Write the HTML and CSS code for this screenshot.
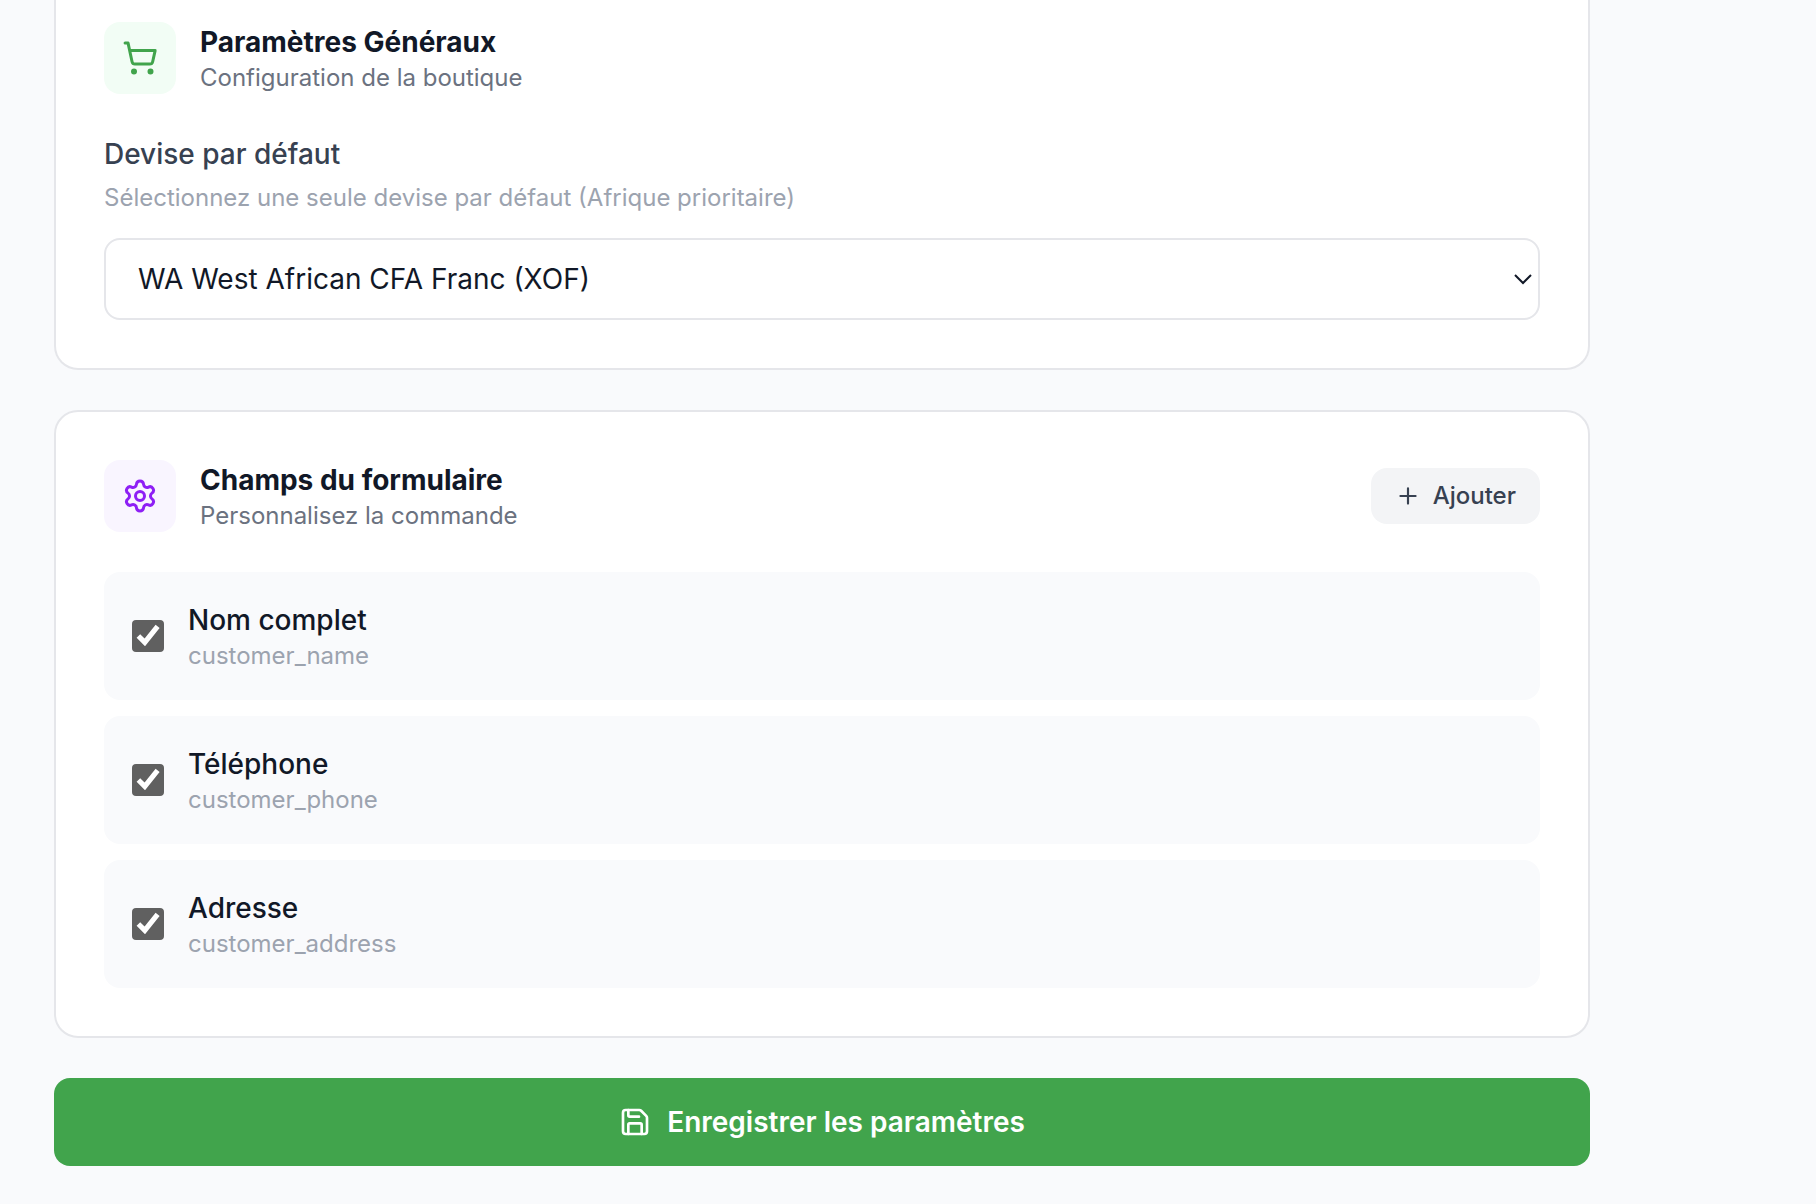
FILE: index.html
```html
<!DOCTYPE html>
<html lang="fr">
<head>
  <meta charset="utf-8">
  <meta name="viewport" content="width=device-width, initial-scale=1">
  <title>Paramètres</title>
  <link rel="stylesheet" href="styles.css">
</head>
<body>
  <main class="page">
    <form class="settings">
      <section class="card card--flush-top">
        <header class="card-header">
          <span class="tile tile--green">
            <svg class="icon" viewBox="0 0 24 24" aria-hidden="true">
              <circle cx="8" cy="21" r="1"/>
              <circle cx="19" cy="21" r="1"/>
              <path d="M2.05 2.05h2l2.66 12.42a2 2 0 0 0 2 1.58h9.78a2 2 0 0 0 1.95-1.57l1.65-7.43H5.12"/>
            </svg>
          </span>
          <div class="card-heading">
            <h2 class="title">Paramètres Généraux</h2>
            <p class="subtitle">Configuration de la boutique</p>
          </div>
        </header>
        <label class="field-label" for="currency">Devise par défaut</label>
        <p class="field-help" id="currency-help">Sélectionnez une seule devise par défaut (Afrique prioritaire)</p>
        <div class="select-wrap">
          <select class="select" id="currency" aria-describedby="currency-help">
            <option>WA West African CFA Franc (XOF)</option>
          </select>
          <svg class="chevron" viewBox="0 0 18 12" aria-hidden="true">
            <path d="M1 2l8 8 8-8"/>
          </svg>
        </div>
      </section>

      <section class="card">
        <header class="card-header">
          <span class="tile tile--purple">
            <svg class="icon" viewBox="0 0 24 24" aria-hidden="true">
              <path d="M9.671 4.136a2.34 2.34 0 0 1 4.659 0 2.34 2.34 0 0 0 3.319 1.915 2.34 2.34 0 0 1 2.33 4.033 2.34 2.34 0 0 0 0 3.831 2.34 2.34 0 0 1-2.33 4.033 2.34 2.34 0 0 0-3.319 1.915 2.34 2.34 0 0 1-4.659 0 2.34 2.34 0 0 0-3.32-1.915 2.34 2.34 0 0 1-2.33-4.033 2.34 2.34 0 0 0 0-3.831A2.34 2.34 0 0 1 6.35 6.051a2.34 2.34 0 0 0 3.319-1.915"/>
              <circle cx="12" cy="12" r="3"/>
            </svg>
          </span>
          <div class="card-heading">
            <h2 class="title">Champs du formulaire</h2>
            <p class="subtitle">Personnalisez la commande</p>
          </div>
          <button class="add-button" type="button">
            <svg class="icon icon--small" viewBox="0 0 24 24" aria-hidden="true">
              <path d="M5 12h14M12 5v14"/>
            </svg>
            Ajouter
          </button>
        </header>
        <div class="fields">
          <label class="field-row">
            <input class="checkbox" type="checkbox" checked>
            <span class="field-text">
              <span class="field-name">Nom complet</span>
              <span class="field-key">customer_name</span>
            </span>
          </label>
          <label class="field-row">
            <input class="checkbox" type="checkbox" checked>
            <span class="field-text">
              <span class="field-name">Téléphone</span>
              <span class="field-key">customer_phone</span>
            </span>
          </label>
          <label class="field-row">
            <input class="checkbox" type="checkbox" checked>
            <span class="field-text">
              <span class="field-name">Adresse</span>
              <span class="field-key">customer_address</span>
            </span>
          </label>
        </div>
      </section>

      <button class="save-button" type="submit">
        <svg class="icon icon--medium" viewBox="0 0 24 24" aria-hidden="true">
          <path d="M15.2 3a2 2 0 0 1 1.4.6l3.8 3.8a2 2 0 0 1 .6 1.4V19a2 2 0 0 1-2 2H5a2 2 0 0 1-2-2V5a2 2 0 0 1 2-2z"/>
          <path d="M17 21v-7a1 1 0 0 0-1-1H8a1 1 0 0 0-1 1v7"/>
          <path d="M7 3v4a1 1 0 0 0 1 1h7"/>
        </svg>
        Enregistrer les paramètres
      </button>
    </form>
  </main>
</body>
</html>
```

FILE: styles.css
```css
*,
*::before,
*::after {
  box-sizing: border-box;
}

body {
  margin: 0;
  min-height: 100vh;
  background: #f9fafc;
  color: #111827;
  font-family: Inter, "Liberation Sans", sans-serif;
  font-size: 28px;
  line-height: 40px;
}

h2,
p {
  margin: 0;
}

button,
select {
  font: inherit;
  color: inherit;
}

.page {
  padding: 0 54px 38px;
}

.settings {
  display: flex;
  flex-direction: column;
  gap: 40px;
  max-width: 1536px;
}

.card {
  padding: 48px;
  background: #fff;
  border: 2px solid #e5e6ea;
  border-radius: 24px;
}

.card--flush-top {
  padding-top: 22px;
  border-top: 0;
  border-radius: 0 0 24px 24px;
}

.card-header {
  display: flex;
  align-items: center;
  gap: 24px;
  margin-bottom: 40px;
}

.card-heading {
  flex: 1;
}

.title {
  font-size: 28px;
  line-height: 40px;
  font-weight: 700;
}

.subtitle {
  font-size: 24px;
  line-height: 32px;
  color: #6b7280;
}

.tile {
  display: grid;
  place-items: center;
  width: 72px;
  height: 72px;
  border-radius: 16px;
}

.tile--green {
  background: #f2fdf5;
  color: #41a44c;
}

.tile--purple {
  background: #f9f5ff;
  color: #8e1ff5;
}

.icon {
  width: 36px;
  height: 36px;
  fill: none;
  stroke: currentColor;
  stroke-width: 2;
  stroke-linecap: round;
  stroke-linejoin: round;
}

.icon--small {
  width: 26px;
  height: 26px;
}

.icon--medium {
  width: 32px;
  height: 32px;
}

.field-label {
  display: block;
  margin-bottom: 8px;
  font-weight: 500;
  color: #374151;
}

.field-help {
  margin-bottom: 24px;
  font-size: 24px;
  line-height: 32px;
  color: #9ca3af;
}

.select-wrap {
  display: grid;
  align-items: center;
}

.select-wrap > * {
  grid-area: 1 / 1;
}

.select {
  appearance: none;
  width: 100%;
  height: 82px;
  padding: 0 32px;
  background: #fff;
  border: 2px solid #e5e6ea;
  border-radius: 16px;
}

.chevron {
  justify-self: end;
  width: 18px;
  height: 12px;
  margin-right: 8px;
  fill: none;
  stroke: #111827;
  stroke-width: 2;
  pointer-events: none;
}

.add-button {
  display: flex;
  align-items: center;
  gap: 12px;
  padding: 12px 24px;
  border: 0;
  border-radius: 16px;
  background: #f3f4f6;
  color: #374151;
  font-size: 24px;
  line-height: 32px;
  font-weight: 500;
}

.fields {
  display: flex;
  flex-direction: column;
  gap: 16px;
}

.field-row {
  display: flex;
  align-items: center;
  gap: 24px;
  padding: 28px;
  border-radius: 16px;
  background: #f9fafc;
}

.checkbox {
  width: 32px;
  height: 32px;
  margin: 0;
  accent-color: #606060;
  clip-path: inset(0 round 4px);
}

.field-text {
  display: flex;
  flex-direction: column;
}

.field-name {
  font-weight: 500;
}

.field-key {
  font-size: 24px;
  line-height: 32px;
  color: #9ca3af;
}

.save-button {
  display: flex;
  align-items: center;
  justify-content: center;
  gap: 16px;
  padding: 24px;
  border: 0;
  border-radius: 16px;
  background: #41a44c;
  color: #fff;
  font-weight: 600;
}
```
